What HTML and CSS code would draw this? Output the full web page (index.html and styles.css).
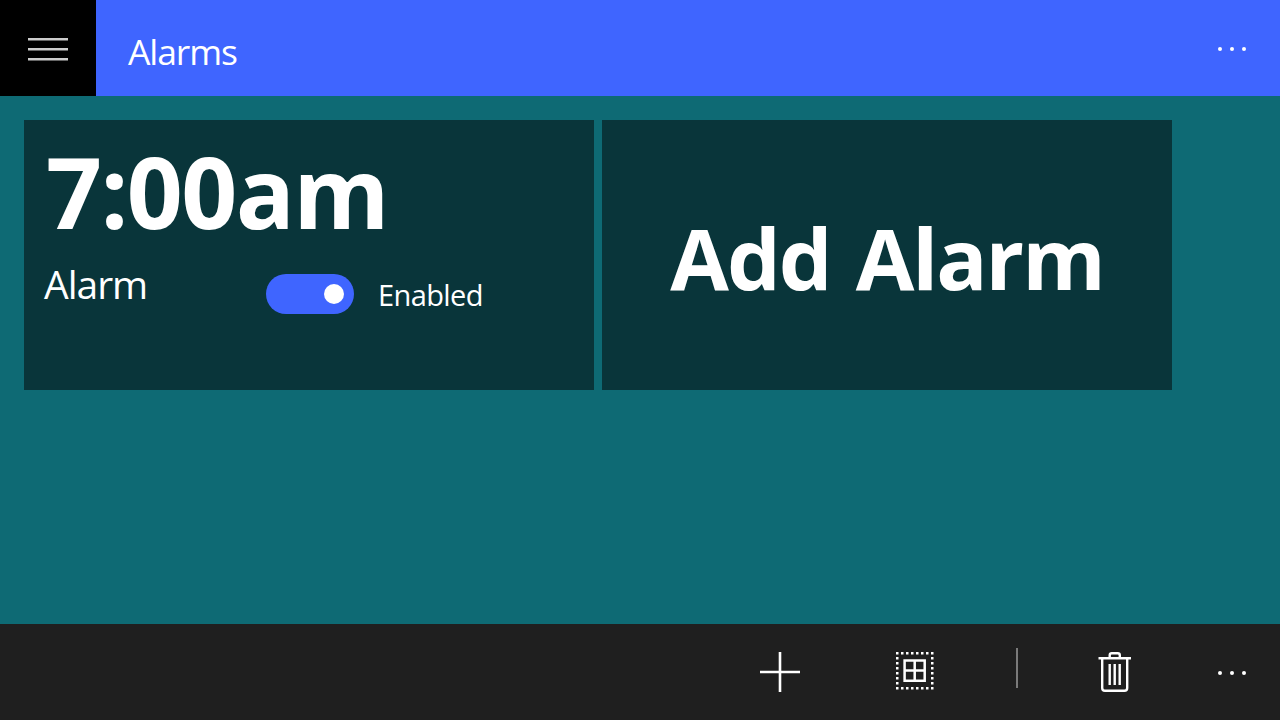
FILE: index.html
```html
<!DOCTYPE html>
<html lang="en">
<head>
    <meta charset="utf-8">
    <title>Alarms</title>
    <link rel="stylesheet" href="styles.css">
</head>
<body>
    <header class="top-bar">
        <button class="menu-button" aria-label="Menu">
            <svg width="40" height="24" viewBox="0 0 40 24" fill="#ccc">
                <rect y="0" width="40" height="2.5"/>
                <rect y="10" width="40" height="2.5"/>
                <rect y="20" width="40" height="2.5"/>
            </svg>
        </button>
        <h1 class="page-title">Alarms</h1>
        <button class="more-button" aria-label="More">
            <svg width="28" height="4" viewBox="0 0 28 4" fill="#fff">
                <circle cx="2" cy="2" r="2"/>
                <circle cx="14" cy="2" r="2"/>
                <circle cx="26" cy="2" r="2"/>
            </svg>
        </button>
    </header>

    <main class="alarm-list">
        <div class="tile">
            <div class="alarm-time">7:00am</div>
            <div class="alarm-row">
                <span class="alarm-name">Alarm</span>
                <span class="toggle"><span class="toggle-knob"></span></span>
                <span class="toggle-label">Enabled</span>
            </div>
        </div>
        <div class="tile tile-add">
            <span class="add-text">Add Alarm</span>
        </div>
    </main>

    <footer class="command-bar">
        <button class="command command-add" aria-label="Add">
            <svg width="40" height="40" viewBox="0 0 40 40" stroke="#fff" stroke-width="2.6">
                <path d="M20 0V40M0 20H40"/>
            </svg>
        </button>
        <button class="command command-select" aria-label="Select">
            <svg width="38" height="38" viewBox="0 0 38 38" fill="none" stroke="#fff" stroke-width="2.5">
                <path stroke-dasharray="2.5 2.5" d="M0 1.25H37.5M0 36.25H37.5M1.25 5V35M36.25 5V35"/>
                <path d="M8.6 8.5H28.7V28.7H8.6ZM18.7 8.5V28.7M8.6 18.6H28.7"/>
            </svg>
        </button>
        <span class="separator"></span>
        <button class="command command-delete" aria-label="Delete">
            <svg width="34" height="40" viewBox="0 0 34 40" fill="none" stroke="#fff" stroke-width="2.4">
                <path d="M.5 6.2H33M11.7 6V3.2Q11.7 1.2 13.7 1.2H19.8Q21.8 1.2 21.8 3.2V6"/>
                <path d="M4.2 6V36Q4.2 38.8 7 38.8H26.4Q29.2 38.8 29.2 36V6"/>
                <path d="M11.7 12V33M16.7 12V33M21.7 12V33"/>
            </svg>
        </button>
        <button class="more-button" aria-label="More">
            <svg width="28" height="4" viewBox="0 0 28 4" fill="#fff">
                <circle cx="2" cy="2" r="2"/>
                <circle cx="14" cy="2" r="2"/>
                <circle cx="26" cy="2" r="2"/>
            </svg>
        </button>
    </footer>
</body>
</html>
```
FILE: styles.css
```css
body {
    margin: 0;
    height: 100vh;
    display: flex;
    flex-direction: column;
    overflow: hidden;
    background-color: #0e6a74;
    color: #fff;
    font-family: "Segoe UI", "Open Sans", sans-serif;
}

button {
    padding: 0;
    border: 0;
    background: none;
}

svg {
    display: block;
}

/* Header with the menu button and page title */
.top-bar {
    display: flex;
    flex: none;
    height: 96px;
    background-color: #3f65ff;
}

.menu-button {
    width: 96px;
    height: 96px;
    padding: 4px 0 0 28px;
    background-color: #000;
}

.page-title {
    flex: 1;
    margin: 0;
    padding: 3px 0 0 32px;
    font-size: 35.5px;
    font-weight: 400;
    line-height: 96px;
    letter-spacing: -1.1px;
}

.more-button {
    width: 62px;
    padding-top: 2px;
}

/* Alarm tiles */
.alarm-list {
    flex: 1;
    display: flex;
    align-items: flex-start;
    gap: 8px;
    padding: 24px;
}

.tile {
    box-sizing: border-box;
    width: 570px;
    height: 270px;
    padding: 16px 20px;
    background-color: #09353a;
    white-space: nowrap;
}

.alarm-time {
    padding-left: 2px;
    font-size: 98px;
    font-weight: 700;
    line-height: 110px;
    letter-spacing: -1.6px;
}

.alarm-row {
    display: flex;
    align-items: flex-start;
    padding-top: 10px;
}

.alarm-name {
    width: 222px;
    font-size: 39px;
    line-height: 55px;
    letter-spacing: -1px;
}

.toggle {
    box-sizing: border-box;
    display: flex;
    justify-content: flex-end;
    width: 88px;
    height: 40px;
    margin-top: 18px;
    padding: 10px;
    border-radius: 20px;
    background-color: #3f65ff;
}

.toggle-knob {
    width: 20px;
    height: 20px;
    border-radius: 50%;
    background-color: #fff;
}

.toggle-label {
    margin: 19px 0 0 24px;
    font-size: 29px;
    line-height: 40px;
    letter-spacing: -0.6px;
}

.tile-add {
    display: flex;
    align-items: center;
    justify-content: center;
}

.add-text {
    padding-top: 5px;
    font-size: 85px;
    font-weight: 700;
    line-height: 1;
    letter-spacing: -2px;
    word-spacing: 5px;
}

/* Bottom command bar */
.command-bar {
    display: flex;
    flex: none;
    justify-content: flex-end;
    height: 96px;
    background-color: #1f1f1f;
}

.command {
    display: flex;
    padding-top: 28px;
}

.command-add {
    width: 136px;
}

.command-select {
    width: 120px;
}

.separator {
    width: 2px;
    height: 40px;
    margin: 24px 80px 0 0;
    background-color: #7a7a7a;
}

.command-delete {
    width: 120px;
}
```
